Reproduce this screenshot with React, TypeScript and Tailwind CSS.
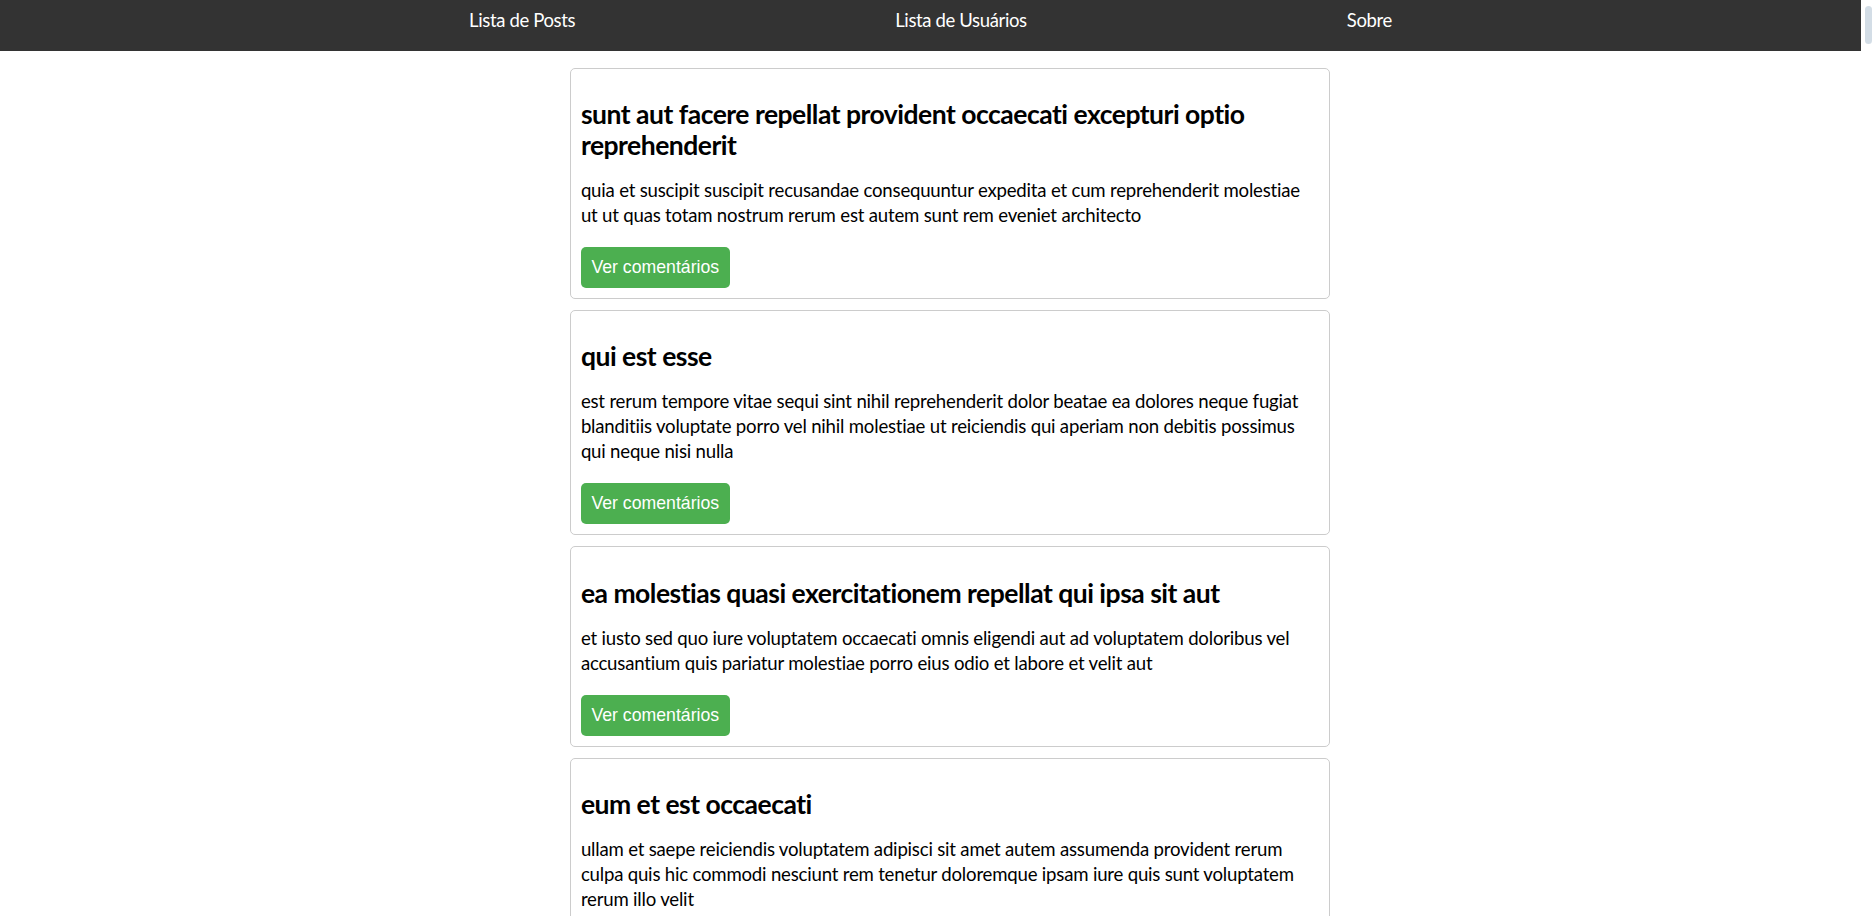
const posts = [
  {
    id: 1,
    title: "sunt aut facere repellat provident occaecati excepturi optio reprehenderit",
    body: "quia et suscipit suscipit recusandae consequuntur expedita et cum reprehenderit molestiae ut ut quas totam nostrum rerum est autem sunt rem eveniet architecto",
  },
  {
    id: 2,
    title: "qui est esse",
    body: "est rerum tempore vitae sequi sint nihil reprehenderit dolor beatae ea dolores neque fugiat blanditiis voluptate porro vel nihil molestiae ut reiciendis qui aperiam non debitis possimus qui neque nisi nulla",
  },
  {
    id: 3,
    title: "ea molestias quasi exercitationem repellat qui ipsa sit aut",
    body: "et iusto sed quo iure voluptatem occaecati omnis eligendi aut ad voluptatem doloribus vel accusantium quis pariatur molestiae porro eius odio et labore et velit aut",
  },
  {
    id: 4,
    title: "eum et est occaecati",
    body: "ullam et saepe reiciendis voluptatem adipisci sit amet autem assumenda provident rerum culpa quis hic commodi nesciunt rem tenetur doloremque ipsam iure quis sunt voluptatem rerum illo velit",
  },
  {
    id: 5,
    title: "nesciunt quas odio",
    body: "repudiandae veniam quaerat sunt sed alias aut fugiat sit autem sed est voluptatem omnis possimus esse voluptatibus quis est aut tenetur dolor neque",
  },
];

export default function App() {
  return (
    <div className="flex h-[916px] overflow-hidden bg-white font-['Lato',sans-serif]">
      <div className="flex-1 overflow-hidden">
        <nav className="h-[51px] bg-[#333333] pt-[8.4px]">
          <ul className="flex justify-center gap-[320px] text-[18.5px] leading-[25px] tracking-[-0.36px] text-white">
            <li>Lista de Posts</li>
            <li>Lista de Usuários</li>
            <li>Sobre</li>
          </ul>
        </nav>

        <div className="pl-[38px] pt-[16.5px]">
          <div className="mx-auto flex w-[760px] flex-col gap-[11px]">
            {posts.map((post) => (
              <div
                key={post.id}
                className="rounded-[5px] border border-[#cccccc] px-[10.4px] py-[10px]"
              >
                <h2 className="mt-[20.4px] text-[26.5px] font-bold leading-[31px] tracking-[-0.5px] text-black">
                  {post.title}
                </h2>
                <p className="mt-[17.2px] text-[18.6px] leading-[25px] tracking-[-0.2px] text-black">
                  {post.body}
                </p>
                <button className="mt-[18.8px] h-[41px] rounded-[5px] bg-[#4caf50] px-[10.5px] font-['Liberation_Sans',Arial,sans-serif] text-[17.7px] text-white">
                  Ver comentários
                </button>
              </div>
            ))}
          </div>
        </div>
      </div>

      {/* scrollbar */}
      <div className="w-[15px] bg-white pl-[4px] pt-[6px]">
        <div className="h-[38px] w-[7px] rounded-full bg-[#d3dde6]" />
      </div>
    </div>
  );
}
